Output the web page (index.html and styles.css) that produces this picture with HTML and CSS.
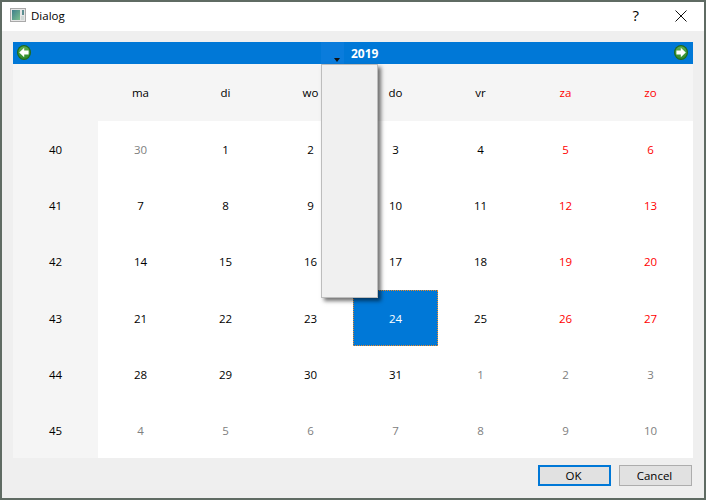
FILE: index.html
```html
<!DOCTYPE html>
<html lang="nl">
<head>
<meta charset="utf-8">
<title>Dialog</title>
<link rel="stylesheet" href="styles.css">
</head>
<body>
<div class="window">
  <header class="titlebar">
    <svg class="app-icon" width="16" height="14" viewBox="0 0 16 14">
      <defs>
        <linearGradient id="g" x1="0" y1="0" x2="1" y2="1"><stop offset="0" stop-color="#3f7f8c"/><stop offset="1" stop-color="#7cc08f"/></linearGradient>
        <linearGradient id="ball" x1="0" y1="0" x2="0" y2="1"><stop offset="0" stop-color="#5fae4e"/><stop offset="1" stop-color="#2f8a2a"/></linearGradient>
      </defs>
      <rect x="0.5" y="0.5" width="15" height="13" fill="#e6e6e6" stroke="#a9a9a9"/>
      <rect x="2" y="2" width="8" height="10" fill="url(#g)"/>
      <rect x="12" y="2" width="2" height="5" fill="#5d8f92"/>
      <rect x="11" y="8" width="3" height="4" fill="#cfd8d6"/>
    </svg>
    <span class="title">Dialog</span>
    <span class="help">?</span>
    <svg class="close" width="12" height="12" viewBox="0 0 12 12"><path d="M0.5 0.5L11.5 11.5M11.5 0.5L0.5 11.5" stroke="#111" stroke-width="1" fill="none"/></svg>
  </header>
  <main class="content">
    <div class="calendar">
      <nav class="navbar">
        <svg class="nav-icon" width="14" height="15" viewBox="0 0 14 15"><ellipse cx="7" cy="7.5" rx="7" ry="7.5" fill="#1f6a1c"/><ellipse cx="7" cy="7.5" rx="5.8" ry="6.3" fill="url(#ball)"/><path d="M2.2 7.5L7.2 2.8V5.6H11.6V9.4H7.2V12.2Z" fill="#fff"/></svg>
        <div class="nav-center">
          <span class="month-btn"><span class="caret"></span></span>
          <span class="year">2019</span>
        </div>
        <svg class="nav-icon" width="14" height="15" viewBox="0 0 14 15"><ellipse cx="7" cy="7.5" rx="7" ry="7.5" fill="#1f6a1c"/><ellipse cx="7" cy="7.5" rx="5.8" ry="6.3" fill="url(#ball)"/><path d="M11.8 7.5L6.8 2.8V5.6H2.4V9.4H6.8V12.2Z" fill="#fff"/></svg>
      </nav>
      <div class="grid">
        <div class="cell head"></div>
        <div class="cell head">ma</div><div class="cell head">di</div><div class="cell head">wo</div><div class="cell head">do</div><div class="cell head">vr</div><div class="cell head red">za</div><div class="cell head red">zo</div>

        <div class="cell week">40</div>
        <div class="cell muted">30</div><div class="cell">1</div><div class="cell">2</div><div class="cell">3</div><div class="cell">4</div><div class="cell red">5</div><div class="cell red">6</div>

        <div class="cell week">41</div>
        <div class="cell">7</div><div class="cell">8</div><div class="cell">9</div><div class="cell">10</div><div class="cell">11</div><div class="cell red">12</div><div class="cell red">13</div>

        <div class="cell week">42</div>
        <div class="cell">14</div><div class="cell">15</div><div class="cell">16</div><div class="cell">17</div><div class="cell">18</div><div class="cell red">19</div><div class="cell red">20</div>

        <div class="cell week">43</div>
        <div class="cell">21</div><div class="cell">22</div><div class="cell">23</div><div class="cell selected">24</div><div class="cell">25</div><div class="cell red">26</div><div class="cell red">27</div>

        <div class="cell week">44</div>
        <div class="cell">28</div><div class="cell">29</div><div class="cell">30</div><div class="cell">31</div><div class="cell muted">1</div><div class="cell muted">2</div><div class="cell muted">3</div>

        <div class="cell week">45</div>
        <div class="cell muted">4</div><div class="cell muted">5</div><div class="cell muted">6</div><div class="cell muted">7</div><div class="cell muted">8</div><div class="cell muted">9</div><div class="cell muted">10</div>
      </div>
      <div class="popup"></div>
    </div>
    <footer class="buttons">
      <button class="btn default" type="button">OK</button>
      <button class="btn" type="button">Cancel</button>
    </footer>
  </main>
</div>
</body>
</html>
```
FILE: styles.css
```css
* { box-sizing: border-box; }
html, body { margin: 0; padding: 0; }
body {
  width: 706px;
  height: 500px;
  font-family: "Open Sans", "Noto Sans", sans-serif;
  font-size: 11.5px;
  color: #000;
  overflow: hidden;
}
.window {
  width: 706px;
  height: 500px;
  display: flex;
  flex-direction: column;
  border: 2px solid #5f6b63;
  background: #efefef;
}
.titlebar {
  height: 29px;
  background: #fff;
  display: flex;
  align-items: center;
  padding: 0 17px 0 8px;
  flex: none;
}
.app-icon { flex: none; margin-top: -3px; }
.title { margin-left: 5px; margin-top: -3px; }
.help { margin-left: auto; font-size: 15px; margin-right: 36px; margin-top: -3px; }
.close { margin-top: -2px; }
.content {
  flex: 1;
  display: flex;
  flex-direction: column;
  padding: 11px 11px 0;
  min-height: 0;
}
.calendar { position: relative; height: 416px; flex: none; }
.navbar {
  height: 22px;
  background: #0078d7;
  display: flex;
  align-items: center;
  justify-content: space-between;
  padding: 0 5px 1px 4px;
  position: relative;
}
.nav-icon { flex: none; }
.nav-center {
  position: absolute;
  left: 308px;
  top: 0;
  height: 22px;
  display: flex;
  align-items: center;
}
.month-btn {
  width: 23px;
  height: 22px;
  background: #0a7cdc;
  position: relative;
  display: block;
}
.caret {
  position: absolute;
  left: 13px;
  top: 16px;
  border-left: 3.5px solid transparent;
  border-right: 3.5px solid transparent;
  border-top: 4px solid #111;
}
.year {
  margin-left: 7px;
  color: #fff;
  font-weight: 700;
  font-size: 12px;
}
.grid {
  display: grid;
  grid-template-columns: 85px repeat(7, 85px);
  grid-template-rows: 57px repeat(6, 1fr);
  height: 394px;
  background: #fff;
}
.cell {
  display: flex;
  align-items: center;
  justify-content: center;
  padding-top: 1px;
}
.head { background: #f5f5f5; padding-top: 0; }
.week { background: #f5f5f5; }
.red { color: #f00; }
.muted { color: #808080; }
.selected {
  background: #0078d7;
  color: #fff;
  outline: 1px dotted #f08a24;
  outline-offset: -1px;
}
.popup {
  position: absolute;
  left: 308px;
  top: 22px;
  width: 57px;
  height: 234px;
  background: #f0f0f0;
  border: 1px solid #bdbdbd;
  box-shadow: 3px 3px 4px rgba(0, 0, 0, 0.55);
}
.buttons {
  flex: 1;
  display: flex;
  justify-content: flex-end;
  align-items: flex-start;
  gap: 8px;
  padding: 7px 1px 0 0;
}
.btn {
  width: 73px;
  height: 21px;
  padding: 0 2px 0 0;
  font: inherit;
  color: #000;
  background: #e1e1e1;
  border: 1px solid #adadad;
  border-radius: 0;
}
.default { border: 2px solid #0078d7; }
```
